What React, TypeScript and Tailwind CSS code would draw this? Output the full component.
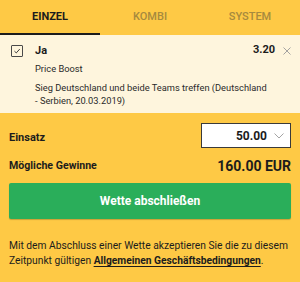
import React from 'react';

export default function App() {
  const tabs = ['EINZEL', 'KOMBI', 'SYSTEM'];
  return (
    <div className="w-[300px] h-[282px] bg-[#fec945] text-[#1c1c1c] font-['Roboto',sans-serif] overflow-hidden">
      {/* Tabs */}
      <div className="flex h-[35px]">
        {tabs.map((t, i) => (
          <div
            key={t}
            className={`flex-1 flex items-center justify-center text-[11px] pt-[1px] ${
              i === 0
                ? 'font-bold text-[#1c1c1c] border-b-2 border-[#1c1c1c]'
                : 'font-medium text-[#a68a3e] border-b-2 border-transparent'
            }`}
          >
            {t}
          </div>
        ))}
      </div>

      {/* Selection */}
      <div className="bg-[#fef5dd] pl-[11px] pr-[9px] pt-[9px] pb-[6px]">
        <div className="flex items-center h-[14px]">
          <div className="w-[12px] h-[12px] border border-[#4a4a4a] rounded-[1px] flex items-center justify-center">
            <svg width="8" height="8" viewBox="0 0 10 10" fill="none" stroke="#333" strokeWidth="1.2">
              <path d="M1.8 5.2 L4.1 7.4 L8.4 2.6" />
            </svg>
          </div>
          <span className="ml-[12px] text-[11px] font-bold flex-1">Ja</span>
          <span className="text-[11px] font-bold -mt-[2px]">3.20</span>
          <svg className="ml-[8px] -mt-[1px]" width="8" height="8" viewBox="0 0 8 8" stroke="#9a9a9a" strokeWidth="0.9">
            <path d="M0.5 0.5 L7.5 7.5 M7.5 0.5 L0.5 7.5" />
          </svg>
        </div>
        <div className="pl-[24px] pr-[20px] mt-[4px] text-[9.3px] text-[#2a2a2a] leading-[13.3px]">
          <div>Price Boost</div>
          <div className="mt-[5.5px]">Sieg Deutschland und beide Teams treffen (Deutschland - Serbien, 20.03.2019)</div>
        </div>
      </div>

      {/* Einsatz */}
      <div className="px-[9px] pt-[10px]">
        <div className="flex items-center justify-between">
          <span className="text-[11px] font-bold pt-[5px]">Einsatz</span>
          <div className="w-[90px] h-[25px] bg-white border border-[#3a3a3a] flex items-center justify-end pr-[6px]">
            <span className="text-[12px] font-bold">50.00</span>
            <svg className="ml-[7px]" width="10" height="6" viewBox="0 0 10 6" fill="none" stroke="#9a9a9a" strokeWidth="0.9">
              <path d="M0.5 0.5 L5 5 L9.5 0.5" />
            </svg>
          </div>
        </div>
        <div className="flex items-center justify-between mt-[9px] h-[18px]">
          <span className="text-[10.6px] font-bold">Mögliche Gewinne</span>
          <span className="text-[14px] font-bold">160.00 EUR</span>
        </div>
        <button className="w-full h-[36px] mt-[8px] rounded-[2px] bg-[#2aae5a] text-white text-[12px] font-bold shadow-[0_1px_1px_rgba(0,0,0,0.2)]">
          Wette abschließen
        </button>
        <p className="mt-[19px] text-[10.25px] leading-[15px] text-[#1c1c1c]">
          Mit dem Abschluss einer Wette akzeptieren Sie die zu diesem Zeitpunkt gültigen{' '}
          <span className="font-bold underline underline-offset-2">Allgemeinen Geschäftsbedingungen</span>.
        </p>
      </div>
    </div>
  );
}
